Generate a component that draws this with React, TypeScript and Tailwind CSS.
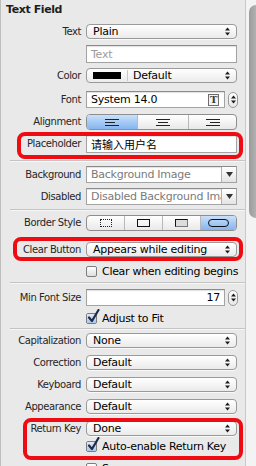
import React from 'react';

const font = "font-['DejaVu_Sans','Liberation_Sans','Noto_Sans_CJK_SC',sans-serif]";

// stacked up/down arrows used by popups
const UpDown: React.FC<{ className?: string }> = ({ className }) => (
  <svg width="5" height="9" viewBox="0 0 5 9" className={className}>
    <path d="M2.5 0.5 L5 3.5 L0 3.5 Z" fill="#1c1c1c" />
    <path d="M0 5.5 L5 5.5 L2.5 8.5 Z" fill="#1c1c1c" />
  </svg>
);

const Label: React.FC<{ children: React.ReactNode }> = ({ children }) => (
  <div className="w-[85px] shrink-0 pr-[5px] text-right text-[10px] leading-none tracking-[-0.4px] text-[#262626] whitespace-nowrap">{children}</div>
);

const Popup: React.FC<{ children: React.ReactNode }> = ({ children }) => (
  <div className="flex h-[15px] w-[151px] items-center rounded-[4px] border border-[#9a9a9a] bg-linear-to-b from-white to-[#ebebeb] pl-[6px] pr-[6px] text-[11px] leading-none tracking-[-0.25px] text-black shadow-[0_1px_0_rgba(255,255,255,0.7)]">
    <span className="flex-1 whitespace-nowrap">{children}</span>
    <UpDown />
  </div>
);

const Field: React.FC<{ children?: React.ReactNode; className?: string }> = ({ children, className }) => (
  <div className={`flex items-center border border-[#a3a3a3] border-t-[#8a8a8a] bg-white pl-[4px] text-[11px] leading-none tracking-[-0.25px] shadow-[inset_0_1px_1px_rgba(0,0,0,0.12)] ${className ?? ''}`}>
    {children}
  </div>
);

const Stepper: React.FC = () => (
  <div className="ml-[3px] flex h-[16px] w-[10px] flex-col items-center justify-center rounded-full border border-[#9a9a9a] bg-linear-to-b from-white to-[#e6e6e6]">
    <UpDown />
  </div>
);

const Checkbox: React.FC<{ checked?: boolean }> = ({ checked }) => (
  <div className="relative h-[11px] w-[11px] shrink-0 rounded-[2px] border border-[#7d7d7d] bg-linear-to-b from-white to-[#dedede]">
    {checked && (
      <>
        <div className="absolute inset-0 rounded-[1px] bg-linear-to-b from-[#dfeaf8] to-[#a9c6ea]" />
        <svg width="13" height="14" viewBox="0 0 13 14" className="absolute left-[0px] top-[-5px]">
          <path d="M2 8.5 L5 12 L11.5 1" stroke="#1e2c4a" strokeWidth="2.2" fill="none" strokeLinecap="round" strokeLinejoin="round" />
        </svg>
      </>
    )}
  </div>
);

const CheckText: React.FC<{ children: React.ReactNode }> = ({ children }) => (
  <span className="ml-[5px] whitespace-nowrap text-[11px] leading-none tracking-[-0.3px] text-black">{children}</span>
);

const Sep: React.FC<{ className?: string }> = ({ className }) => (
  <div className={`ml-[9px] h-px bg-[#c4c4c4] shadow-[0_1px_0_#f6f6f6] ${className ?? ''}`} />
);

const Row: React.FC<{ label?: string; className?: string; children: React.ReactNode }> = ({ label, className, children }) => (
  <div className={`flex items-center ${className ?? ''}`}>
    <Label>{label}</Label>
    {children}
  </div>
);

const AlignIcon: React.FC<{ mode: 'l' | 'c' | 'r' }> = ({ mode }) => {
  const x = mode === 'l' ? 0 : mode === 'c' ? 2 : 4;
  return (
    <svg width="14" height="7" viewBox="0 0 14 7">
      <rect x="0" y="0" width="14" height="1" fill="#222" />
      <rect x={x} y="3" width="10" height="1" fill="#222" />
      <rect x="0" y="6" width="14" height="1" fill="#222" />
    </svg>
  );
};

const Seg: React.FC<{ selected?: boolean; last?: boolean; className?: string; children: React.ReactNode }> = ({ selected, last, className, children }) => (
  <div
    className={`flex h-full items-center justify-center ${last ? '' : 'border-r border-r-[#b8b8b8]'} ${
      selected ? 'bg-linear-to-b from-[#c9e0fb] to-[#84b5ef]' : ''
    } ${className ?? ''}`}
  >
    {children}
  </div>
);

const Popover: React.FC<{ className: string }> = ({ className }) => (
  <div className={`pointer-events-none absolute rounded-[8px] border-[4px] border-[#ee0c12] ${className}`} />
);

const DropArrow: React.FC = () => (
  <div className="flex h-full w-[15px] shrink-0 items-center justify-center border-l border-l-[#b0b0b0] bg-linear-to-b from-white to-[#e4e4e4]">
    <svg width="7" height="5" viewBox="0 0 7 5"><path d="M0 0 L7 0 L3.5 5 Z" fill="#333" /></svg>
  </div>
);

export default function App() {
  return (
    <div className={`flex h-[466px] w-[256px] overflow-hidden bg-[#e9e9e9] ${font}`}>
      <div className="relative w-[245px] shrink-0 border-l border-l-[#bdbdbd]">
        <div className="h-[20px] pl-[5px] text-[11px] font-bold leading-[20px] tracking-[-0.4px] text-[#1e1e1e]">Text Field</div>

        <Row label="Text" className="mt-[4px]">
          <Popup>Plain</Popup>
        </Row>

        <Row className="mt-[6px]">
          <Field className="h-[18px] w-[151px] pl-[3px] text-[#9b9b9b]">Text</Field>
        </Row>

        <Row label="Color" className="mt-[5px]">
          <div className="flex h-[15px] w-[151px] items-center rounded-[4px] border border-[#9a9a9a] bg-linear-to-b from-white to-[#ebebeb] pr-[6px] text-[11px] leading-none tracking-[-0.25px] text-black">
            <div className="ml-[6px] h-[7px] w-[28px] bg-black" />
            <div className="ml-[6px] h-[11px] w-px bg-[#c9c9c9]" />
            <span className="ml-[5px] flex-1">Default</span>
            <UpDown />
          </div>
        </Row>

        <Row label="Font" className="mt-[8px]">
          <Field className="h-[17px] w-[139px] pl-[3px] text-black">
            <span className="flex-1">System 14.0</span>
            <div className="relative mr-[5px] flex h-[12px] w-[11px] items-end justify-center border border-[#6e6e6e] bg-[#f3f3f3] font-['DejaVu_Serif',serif] text-[10px] font-bold leading-[10px] text-[#3a3a3a]">
              <div className="absolute left-[1px] right-[1px] top-[1px] h-px border-t border-dotted border-t-[#777]" />
              T
            </div>
          </Field>
          <Stepper />
        </Row>

        <Row label="Alignment" className="mt-[6px]">
          <div className="flex h-[16px] w-[151px] overflow-hidden rounded-[4px] border border-[#8e8e8e] bg-linear-to-b from-white to-[#e9e9e9]">
            <Seg selected className="w-[51px]"><AlignIcon mode="l" /></Seg>
            <Seg className="w-[51px]"><AlignIcon mode="c" /></Seg>
            <Seg last className="flex-1"><AlignIcon mode="r" /></Seg>
          </div>
        </Row>

        <Row label="Placeholder" className="mt-[5px]">
          <Field className="h-[18px] w-[151px] pl-[3px] font-['Noto_Sans_CJK_SC',sans-serif] text-[11.5px] tracking-normal text-black">请输入用户名</Field>
        </Row>

        <Sep className="mt-[7px]" />

        <Row label="Background" className="mt-[5px]">
          <Field className="h-[17px] w-[151px] pl-[3px] pr-0 text-[#7a7a7a]">
            <span className="flex-1 overflow-hidden whitespace-nowrap">Background Image</span>
            <DropArrow />
          </Field>
        </Row>

        <Row label="Disabled" className="mt-[5px]">
          <Field className="h-[17px] w-[151px] pl-[3px] pr-0 text-[#7a7a7a]">
            <span className="flex-1 overflow-hidden whitespace-nowrap">Disabled Background Image</span>
            <DropArrow />
          </Field>
        </Row>

        <Sep className="mt-[4px]" />

        <Row label="Border Style" className="mt-[5px]">
          <div className="flex h-[16px] w-[151px] overflow-hidden rounded-[4px] border border-[#8e8e8e] bg-linear-to-b from-white to-[#e9e9e9]">
            <Seg className="w-[38px]">
              <div className="h-[8px] w-[12px] border border-dotted border-[#222]" />
            </Seg>
            <Seg className="w-[38px]">
              <div className="h-[8px] w-[13px] border border-[#111]" />
            </Seg>
            <Seg className="w-[38px]">
              <div className="h-[8px] w-[13px] border border-[#777] border-l-[#111] border-t-[#111] bg-[#dcdcdc]" />
            </Seg>
            <Seg selected last className="flex-1">
              <div className="h-[8px] w-[21px] rounded-full border border-[#111]" />
            </Seg>
          </div>
        </Row>

        <Row label="Clear Button" className="mt-[11px]">
          <Popup>Appears while editing</Popup>
        </Row>

        <Row className="mt-[8px] h-[12px]">
          <Checkbox />
          <CheckText>Clear when editing begins</CheckText>
        </Row>

        <Sep className="mt-[5px]" />

        <Row label="Min Font Size" className="mt-[6px]">
          <Field className="h-[17px] w-[139px] justify-end pr-[4px] text-black">17</Field>
          <Stepper />
        </Row>

        <Row className="mt-[6px] h-[12px]">
          <Checkbox checked />
          <CheckText>Adjust to Fit</CheckText>
        </Row>

        <Sep className="mt-[4px]" />

        <Row label="Capitalization" className="mt-[4px]">
          <Popup>None</Popup>
        </Row>
        <Row label="Correction" className="mt-[7px]">
          <Popup>Default</Popup>
        </Row>
        <Row label="Keyboard" className="mt-[7px]">
          <Popup>Default</Popup>
        </Row>
        <Row label="Appearance" className="mt-[7px]">
          <Popup>Default</Popup>
        </Row>
        <Row label="Return Key" className="mt-[7px]">
          <Popup>Done</Popup>
        </Row>

        <Row className="mt-[4px] h-[12px]">
          <Checkbox checked />
          <CheckText>Auto-enable Return Key</CheckText>
        </Row>

        <Row className="mt-[10px] h-[12px]">
          <Checkbox />
          <CheckText>Secure</CheckText>
        </Row>

        {/* red annotation boxes */}
        <Popover className="left-[16px] top-[132px] h-[27px] w-[226px]" />
        <Popover className="left-[12px] top-[237px] h-[24px] w-[230px]" />
        <Popover className="left-[22px] top-[418px] h-[42px] w-[220px]" />
      </div>

      <div className="flex-1 border-l border-l-[#c9c9c9] bg-[#f3f3f3] pl-[3px] pt-[5px]">
        <div className="h-[213px] rounded-l-full bg-linear-to-r from-[#9c9c9c] to-[#b1b1b1]" />
      </div>
    </div>
  );
}
